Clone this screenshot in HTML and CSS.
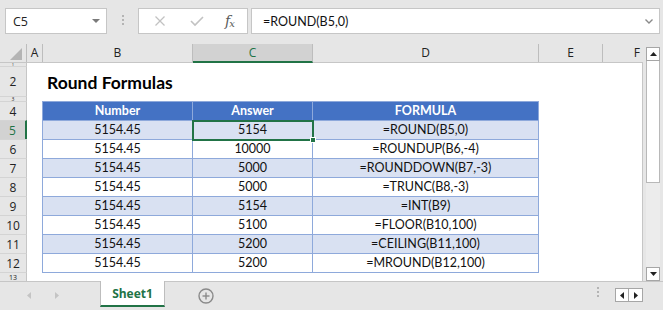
FILE: index.html
```html
<!DOCTYPE html>
<html>
<head>
    <title>Round Formulas</title>
    <link rel="stylesheet" href="styles.css">
</head>
<body>
    <div class="app">
        <div class="formula-bar">
            <div class="name-box">
                <span>C5</span>
                <svg class="caret" viewBox="0 0 8 4"><polygon points="0,0 8,0 4,4" /></svg>
            </div>
            <div class="grip"><i></i><i></i><i></i></div>
            <div class="fx-buttons">
                <svg class="fx-icon" viewBox="0 0 12 12" fill="none" stroke="currentColor" stroke-width="1.2">
                    <line x1="1.5" y1="1.5" x2="10.5" y2="10.5" />
                    <line x1="10.5" y1="1.5" x2="1.5" y2="10.5" />
                </svg>
                <svg class="fx-icon" viewBox="0 0 14 12" fill="none" stroke="currentColor" stroke-width="1.6">
                    <polyline points="1,6 5,10 13,2" />
                </svg>
                <span class="fx">f<sub>x</sub></span>
            </div>
            <div class="formula-input">
                <span>=ROUND(B5,0)</span>
                <svg class="chevron" viewBox="0 0 8 5" fill="none" stroke="currentColor" stroke-width="1.4">
                    <polyline points="0.5,0.5 4,4 7.5,0.5" />
                </svg>
            </div>
        </div>

        <div class="workspace">
            <div class="grid">
                <div class="col-headers">
                    <div class="corner">
                        <svg viewBox="0 0 12 12"><polygon points="12,0 12,12 0,12" /></svg>
                    </div>
                    <div class="ch w-a">A</div>
                    <div class="ch w-b">B</div>
                    <div class="ch w-c selected">C</div>
                    <div class="ch w-d">D</div>
                    <div class="ch w-e">E</div>
                    <div class="ch w-f">F</div>
                </div>

                <div class="row h-1"><div class="rh">1</div></div>
                <div class="row h-2">
                    <div class="rh">2</div>
                    <div class="cell-a"></div>
                    <div class="title">Round Formulas</div>
                </div>
                <div class="row h-3"><div class="rh">3</div></div>

                <div class="row">
                    <div class="rh">4</div>
                    <div class="cell-a"></div>
                    <div class="tc b head">Number</div>
                    <div class="tc c head">Answer</div>
                    <div class="tc d head">FORMULA</div>
                    <div class="rest"></div>
                </div>
                <div class="row band">
                    <div class="rh selected">5</div>
                    <div class="cell-a"></div>
                    <div class="tc b">5154.45</div>
                    <div class="tc c active">5154<span class="handle"></span></div>
                    <div class="tc d">=ROUND(B5,0)</div>
                    <div class="rest"></div>
                </div>
                <div class="row">
                    <div class="rh">6</div>
                    <div class="cell-a"></div>
                    <div class="tc b">5154.45</div>
                    <div class="tc c">10000</div>
                    <div class="tc d">=ROUNDUP(B6,-4)</div>
                    <div class="rest"></div>
                </div>
                <div class="row band">
                    <div class="rh">7</div>
                    <div class="cell-a"></div>
                    <div class="tc b">5154.45</div>
                    <div class="tc c">5000</div>
                    <div class="tc d">=ROUNDDOWN(B7,-3)</div>
                    <div class="rest"></div>
                </div>
                <div class="row">
                    <div class="rh">8</div>
                    <div class="cell-a"></div>
                    <div class="tc b">5154.45</div>
                    <div class="tc c">5000</div>
                    <div class="tc d">=TRUNC(B8,-3)</div>
                    <div class="rest"></div>
                </div>
                <div class="row band">
                    <div class="rh">9</div>
                    <div class="cell-a"></div>
                    <div class="tc b">5154.45</div>
                    <div class="tc c">5154</div>
                    <div class="tc d">=INT(B9)</div>
                    <div class="rest"></div>
                </div>
                <div class="row">
                    <div class="rh">10</div>
                    <div class="cell-a"></div>
                    <div class="tc b">5154.45</div>
                    <div class="tc c">5100</div>
                    <div class="tc d">=FLOOR(B10,100)</div>
                    <div class="rest"></div>
                </div>
                <div class="row band">
                    <div class="rh">11</div>
                    <div class="cell-a"></div>
                    <div class="tc b">5154.45</div>
                    <div class="tc c">5200</div>
                    <div class="tc d">=CEILING(B11,100)</div>
                    <div class="rest"></div>
                </div>
                <div class="row">
                    <div class="rh">12</div>
                    <div class="cell-a"></div>
                    <div class="tc b">5154.45</div>
                    <div class="tc c">5200</div>
                    <div class="tc d">=MROUND(B12,100)</div>
                    <div class="rest"></div>
                </div>
                <div class="row h-13">
                    <div class="rh">13</div>
                    <div class="cell-a"></div>
                    <div class="tc b below"></div>
                    <div class="tc c below"></div>
                    <div class="tc d below"></div>
                    <div class="rest"></div>
                </div>
            </div>

            <div class="vscroll">
                <div class="sbtn"><svg viewBox="0 0 7 4"><polygon points="0,4 7,4 3.5,0" /></svg></div>
                <div class="thumb"></div>
                <div class="track"></div>
                <div class="sbtn"><svg viewBox="0 0 7 4"><polygon points="0,0 7,0 3.5,4" /></svg></div>
            </div>
        </div>

        <div class="tab-bar">
            <div class="tab-nav">
                <svg viewBox="0 0 4 7"><polygon points="4,0 4,7 0,3.5" /></svg>
                <svg viewBox="0 0 4 7"><polygon points="0,0 0,7 4,3.5" /></svg>
            </div>
            <div class="tab">Sheet1</div>
            <svg class="add-sheet" viewBox="0 0 16 16" fill="none" stroke="currentColor" stroke-width="1.4">
                <circle cx="8" cy="8" r="7" />
                <line x1="8" y1="4.5" x2="8" y2="11.5" />
                <line x1="4.5" y1="8" x2="11.5" y2="8" />
            </svg>
            <div class="spacer"></div>
            <div class="grip"><i></i><i></i><i></i></div>
            <div class="hscroll">
                <div class="hbtn"><svg viewBox="0 0 4 7"><polygon points="4,0 4,7 0,3.5" /></svg></div>
                <div class="hbtn"><svg viewBox="0 0 4 7"><polygon points="0,0 0,7 4,3.5" /></svg></div>
            </div>
        </div>
    </div>
</body>
</html>
```

FILE: styles.css
```css
* {
    box-sizing: border-box;
}

body {
    margin: 0;
    background: #e6e6e6;
    font-family: "Open Sans", sans-serif;
    color: #222;
}

.app {
    width: 663px;
    height: 310px;
    overflow: hidden;
    display: flex;
    flex-direction: column;
}

/* formula bar */

.formula-bar {
    height: 44px;
    flex-shrink: 0;
    display: flex;
    align-items: flex-start;
    padding: 8px 0 0 5px;
}

.name-box {
    width: 102px;
    height: 26px;
    background: #fff;
    border: 1px solid #c6c6c6;
    display: flex;
    align-items: center;
    justify-content: space-between;
    padding: 0 6px 0 7px;
    font-size: 12.5px;
}

.caret {
    width: 8px;
    height: 4px;
    fill: #7a7a7a;
}

.grip {
    display: flex;
    flex-direction: column;
    gap: 2px;
    margin: 0 14px 0 15px;
    padding-top: 7px;
}

.grip i {
    display: block;
    width: 2px;
    height: 2px;
    background: #b4b4b4;
}

.fx-buttons {
    width: 110px;
    height: 26px;
    background: #fff;
    border: 1px solid #c6c6c6;
    display: flex;
    align-items: center;
    padding-left: 15px;
    color: #c2c2c2;
}

.fx-icon {
    width: 12px;
    height: 12px;
    margin-right: 24px;
}

.fx-icon + .fx-icon {
    width: 14px;
    margin-right: 21px;
}

.fx {
    font-family: "DejaVu Serif", serif;
    font-style: italic;
    font-size: 14px;
    color: #5a5a5a;
    letter-spacing: -1px;
}

.fx sub {
    font-size: 10px;
    vertical-align: -1px;
}

.formula-input {
    width: 409px;
    height: 26px;
    margin-left: 3px;
    background: #fff;
    border: 1px solid #c6c6c6;
    display: flex;
    align-items: center;
    justify-content: space-between;
    padding: 0 6px 0 11px;
    font-family: Lato, sans-serif;
    font-size: 12.5px;
    color: #111;
}

.chevron {
    width: 8px;
    height: 5px;
    color: #8a8a8a;
}

/* grid */

.workspace {
    height: 237px;
    flex-shrink: 0;
    display: flex;
}

.grid {
    width: 643px;
    display: flex;
    flex-direction: column;
    background: #fff;
    font-family: Lato, sans-serif;
    font-size: 12.5px;
    color: #111;
}

.col-headers {
    height: 19px;
    flex-shrink: 0;
    display: flex;
    background: #e6e6e6;
    border-bottom: 1px solid #c6c6c6;
    font-family: "Open Sans", sans-serif;
    font-size: 12px;
    color: #222;
}

.corner {
    width: 27px;
    border-right: 1px solid #bdbdbd;
    display: flex;
    align-items: flex-end;
    justify-content: flex-end;
    padding: 0 4px 2px 0;
}

.corner svg {
    width: 12px;
    height: 12px;
    fill: #b4b4b4;
}

.ch {
    border-right: 1px solid #bdbdbd;
    display: flex;
    align-items: center;
    justify-content: center;
    line-height: 1;
}

.ch.selected {
    background: #d2d2d2;
    color: #217346;
    border-bottom: 2px solid #217346;
    margin-bottom: -1px;
}

.w-a { width: 16px; }
.w-b { width: 150px; }
.w-c { width: 120px; }
.w-d { width: 226px; }
.w-e { width: 64px; }
.w-f { flex: 1; border-right: none; justify-content: flex-end; padding-right: 3px; }

.row {
    height: 19px;
    display: flex;
    flex-shrink: 0;
    border-right: 1px solid #c6c6c6;
}

.h-1 { height: 3px; }
.h-2 { height: 30px; }
.h-3 { height: 5px; }
.h-13 { flex: 1 1 0; height: auto; min-height: 0; overflow: hidden; }

.rh {
    width: 27px;
    flex-shrink: 0;
    background: #e6e6e6;
    border-right: 1px solid #c6c6c6;
    border-top: 1px solid #d4d4d4;
    display: flex;
    align-items: center;
    justify-content: center;
    overflow: hidden;
    font-family: "Open Sans", sans-serif;
    font-size: 12px;
    color: #222;
}

/* rows 1, 3 and 13 are squeezed, only a sliver of the number shows */
.h-1 .rh {
    border-top: none;
    font-size: 4px;
    line-height: 3px;
}

.h-3 .rh {
    font-size: 5px;
    line-height: 4px;
}

.h-13 .rh {
    align-items: flex-start;
    font-size: 7px;
    line-height: 7px;
    padding-top: 1px;
}

.rh.selected {
    background: #d2d2d2;
    color: #217346;
    border-right: 2px solid #217346;
}

.cell-a {
    width: 15px;
    flex-shrink: 0;
}

.title {
    align-self: flex-end;
    padding: 0 0 3px 5px;
    font-size: 17.5px;
    font-weight: bold;
    color: #000;
}

.tc {
    border-top: 1px solid #8ea9db;
    border-left: 1px solid #8ea9db;
    text-align: center;
    line-height: 18px;
    white-space: nowrap;
}

.tc.b { width: 150px; }
.tc.c { width: 120px; }
.tc.d { width: 227px; border-right: 1px solid #8ea9db; }

.tc.head {
    background: #4472c4;
    color: #fff;
    font-weight: bold;
}

.band .tc {
    background: #d9e1f2;
}

.tc.below {
    border-left: none;
    border-right: none;
}

.tc.c.below {
    width: 121px;
    margin-left: -1px;
}

.tc.active {
    position: relative;
}

.tc.active::after {
    content: '';
    position: absolute;
    left: -1px;
    top: -1px;
    right: -2px;
    bottom: -2px;
    border: 2px solid #217346;
}

.handle {
    position: absolute;
    right: -4px;
    bottom: -4px;
    width: 6px;
    height: 6px;
    background: #217346;
    border: 1px solid #fff;
    z-index: 1;
}

.rest {
    flex: 1;
}

/* vertical scroll bar */

.vscroll {
    flex: 1;
    display: flex;
    flex-direction: column;
    padding: 3px 3px 0 3px;
    background: #e6e6e6;
}

.sbtn {
    height: 14px;
    flex-shrink: 0;
    background: #fff;
    border: 1px solid #a6a6a6;
    display: flex;
    align-items: center;
    justify-content: center;
}

.sbtn svg {
    width: 7px;
    height: 4px;
    fill: #222;
}

.thumb {
    height: 122px;
    flex-shrink: 0;
    background: #fff;
    border: 1px solid #b8b8b8;
    border-top: none;
}

.track {
    flex: 1;
    background: #ececec;
}

/* sheet tabs */

.tab-bar {
    flex: 1;
    display: flex;
    align-items: flex-start;
    border-top: 1px solid #c6c6c6;
}

.tab-nav {
    width: 100px;
    display: flex;
    gap: 24px;
    padding: 10px 0 0 27px;
}

.tab-nav svg {
    width: 4px;
    height: 7px;
    fill: #c4c4c4;
}

.tab {
    width: 65px;
    height: 26px;
    margin-top: -1px;
    background: #fff;
    border-left: 1px solid #bdbdbd;
    border-right: 1px solid #bdbdbd;
    border-bottom: 2px solid #217346;
    display: flex;
    align-items: center;
    justify-content: center;
    font-size: 12px;
    font-weight: bold;
    color: #217346;
}

.add-sheet {
    width: 16px;
    height: 16px;
    margin: 6px 0 0 33px;
    color: #8a8a8a;
}

.spacer {
    flex: 1;
}

.tab-bar .grip {
    margin: 0 16px 0 0;
    padding-top: 5px;
}

.hscroll {
    display: flex;
    margin: 6px 20px 0 0;
}

.hbtn {
    width: 14px;
    height: 14px;
    background: #fff;
    border: 1px solid #a6a6a6;
    display: flex;
    align-items: center;
    justify-content: center;
}

.hbtn + .hbtn {
    border-left: none;
}

.hbtn svg {
    width: 4px;
    height: 7px;
    fill: #222;
}
```
